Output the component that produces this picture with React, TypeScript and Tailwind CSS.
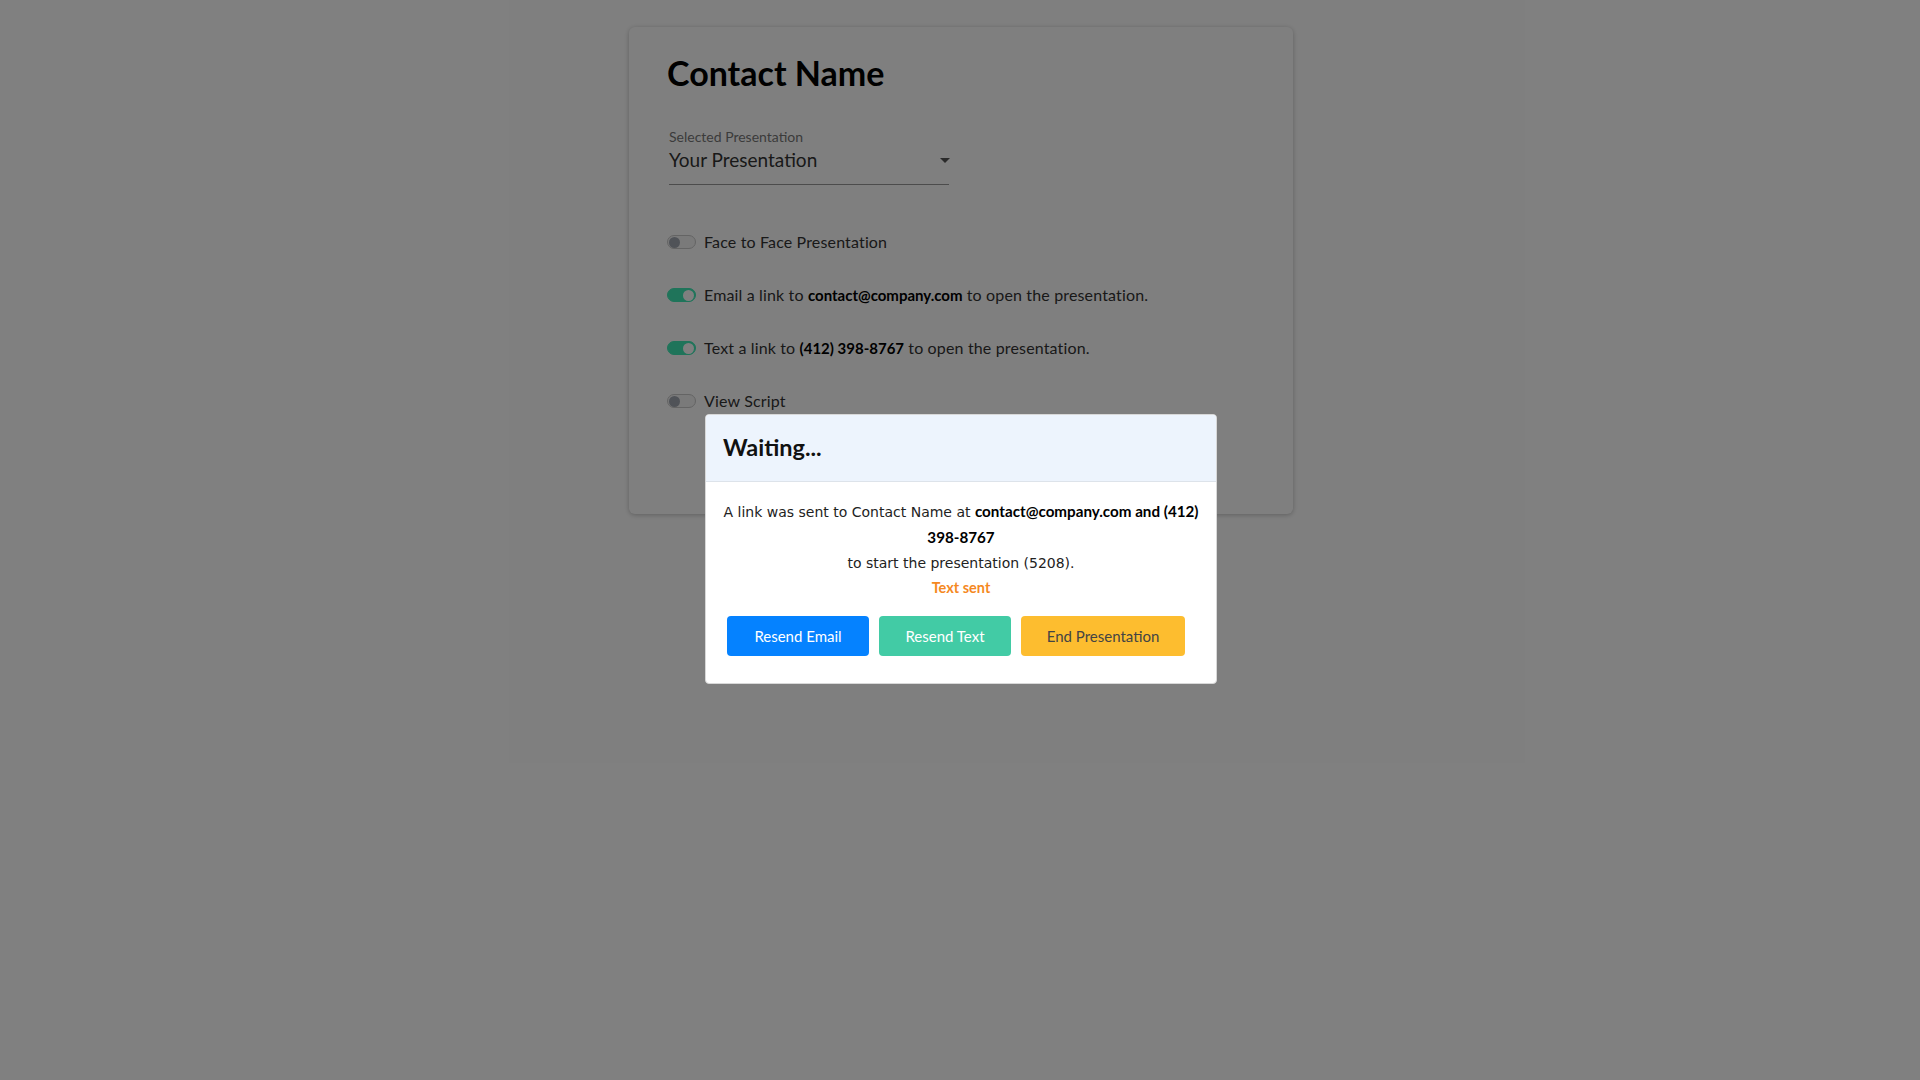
import React from "react";

const AVENIR = "font-['Lato',_'Open_Sans',_sans-serif]";
const MONT = "font-['DejaVu_Sans',_'Open_Sans',_sans-serif]";

function Toggle({ on }: { on: boolean }) {
  return (
    <span
      className={`relative inline-flex h-[14px] w-[29px] shrink-0 items-center rounded-full border ${
        on ? "border-[#3fe8b4] bg-[#3fe8b4]" : "border-[#c8c8c8] bg-[#f4f4f4]"
      }`}
    >
      <span
        className={`absolute h-[11px] w-[11px] rounded-full ${
          on ? "right-[1px] bg-white" : "left-[1px] bg-[#a0a6b0]"
        }`}
      />
    </span>
  );
}

function OptionRow({ on, children }: { on: boolean; children: React.ReactNode }) {
  return (
    <div className="flex h-[24px] items-center gap-[8px]">
      <Toggle on={on} />
      <span className="text-[16px] tracking-[0.15px] text-[#333]">{children}</span>
    </div>
  );
}

export default function App() {
  return (
    <div className={`relative min-h-screen bg-white ${AVENIR}`}>
      {/* Card behind the overlay */}
      <div className="flex justify-center pl-[2px] pt-[27px]">
        <div className="w-[664px] rounded-[6px] bg-white pl-[38px] pt-[26px] pb-[101px] shadow-[0_1px_5px_rgba(0,0,0,0.25)]">
          <h1 className="text-[34px] font-bold leading-[40px] text-black">Contact Name</h1>

          <div className="ml-[2px] mt-[36px] w-[280px] border-b border-[#999] pb-[12px]">
            <div className="text-[14px] leading-[16px] text-[#777]">Selected Presentation</div>
            <div className="mt-[3px] flex h-[24px] items-center justify-between">
              <span className="text-[19px] text-[#333]">Your Presentation</span>
              <span className="mr-[-1px] h-0 w-0 border-x-[5px] border-t-[5px] border-x-transparent border-t-[#555]" />
            </div>
          </div>

          <div className="mt-[45px] flex flex-col gap-[29px]">
            <OptionRow on={false}>Face to Face Presentation</OptionRow>
            <OptionRow on={true}>
              Email a link to <b className="text-[15px] font-bold tracking-normal text-black">contact@company.com</b> to open the presentation.
            </OptionRow>
            <OptionRow on={true}>
              Text a link to <b className="text-[15px] font-bold tracking-normal text-black">(412) 398-8767</b> to open the presentation.
            </OptionRow>
            <OptionRow on={false}>View Script</OptionRow>
          </div>
        </div>
      </div>

      {/* Overlay */}
      <div className="absolute inset-0 flex justify-center bg-black/50 pl-[2px] pt-[414px]">
        <div className="h-fit w-[512px] overflow-hidden rounded-[4px] border border-[#d8d8d8] bg-white">
          <div className="flex h-[67px] items-center border-b border-[#dde3ea] bg-[#edf4fd] px-[17px]">
            <h2 className="text-[23.5px] font-bold text-[#111]">Waiting...</h2>
          </div>
          <div className="pt-[17px] pb-[27px] text-center">
            <div className={`px-[14px] text-[14px] leading-[25px] text-[#222] ${MONT}`}>
              A link was sent to Contact Name at{" "}
              <b className={`font-bold text-black ${AVENIR} text-[15.2px]`}>
                contact@company.com and (412) <span className="whitespace-nowrap">398-8767</span>
              </b>
              <br />
              to start the presentation (5208).
            </div>
            <div className="text-[14.5px] font-bold leading-[24px] text-[#f5891f]">Text sent</div>
            <div className="mt-[16px] flex gap-[10px] pl-[21px]">
              <button className="h-[40px] w-[142px] rounded-[4px] bg-[#0582ff] text-[15px] text-white">
                Resend Email
              </button>
              <button className="h-[40px] w-[132px] rounded-[4px] bg-[#42cba5] text-[15px] text-white">
                Resend Text
              </button>
              <button className="h-[40px] w-[164px] rounded-[4px] bg-[#fdbd2f] text-[15px] text-[#444]">
                End Presentation
              </button>
            </div>
          </div>
        </div>
      </div>
    </div>
  );
}
